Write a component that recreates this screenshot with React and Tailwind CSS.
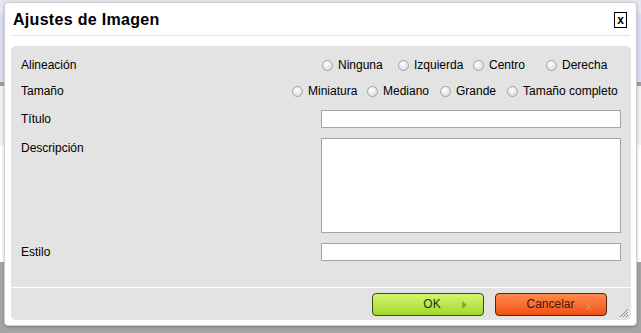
import React from "react";

const Radio = ({ label, className = "" }) => (
  <label className={`flex items-center ${className}`}>
    <span className="h-[11px] w-[11px] shrink-0 rounded-full border border-[#a3a3a3] bg-[radial-gradient(circle_at_40%_35%,#ffffff_0%,#ececec_45%,#cfcfcf_100%)]" />
    <span className="ml-[5px] whitespace-nowrap">{label}</span>
  </label>
);

const Field = ({ className = "" }) => (
  <div className={`w-[300px] border border-[#a5a5a5] bg-white ${className}`} />
);

export default function App() {
  return (
    <div className="relative h-[333px] w-[641px] overflow-hidden bg-[#a6a6a6] font-['Liberation_Sans',Arial,sans-serif] text-[12px] text-black">
      {/* page behind the dialog */}
      <div className="flex h-full flex-col">
        <div className="h-[14px] bg-[#e6e6f2]" />
        <div className="h-[68px] bg-[#d8dcf4]" />
        <div className="h-[4px] bg-[#9c9c9c]" />
        <div className="h-[59px] bg-[#f1f1f1]" />
        <div className="h-[117px] bg-white" />
        <div className="flex-1 bg-[#a4a4a4]" />
      </div>

      {/* dialog */}
      <div className="absolute left-[4px] top-[2px] flex h-[324px] w-[633px] flex-col rounded-[4px] border border-[#cfcfcf] bg-white shadow-[0_1px_3px_rgba(0,0,0,0.25)]">
        <div className="mx-[6px] flex h-[33px] shrink-0 items-center justify-between border-b border-[#e2e2e2] pl-[2px]">
          <h1 className="mt-[1px] text-[16px] font-bold tracking-[0.3px] text-black">
            Ajustes de Imagen
          </h1>
          <button className="mr-[3px] mt-[1px] flex h-[16px] w-[13px] items-center justify-center border border-black text-[12px] font-bold leading-none text-black">
            x
          </button>
        </div>

        <div className="relative ml-[6px] mr-[5px] mt-[10px] flex flex-col rounded-[5px] bg-[#e3e3e3]">
          <div className="flex flex-col px-[10px] pt-[10px]">
            <div className="flex h-[18px] items-center">
              <span className="w-[301px] shrink-0">Alineación</span>
              <Radio label="Ninguna" className="w-[76px]" />
              <Radio label="Izquierda" className="w-[75px]" />
              <Radio label="Centro" className="w-[73px]" />
              <Radio label="Derecha" />
            </div>
            <div className="mt-[8px] flex h-[18px] items-center">
              <span className="w-[271px] shrink-0">Tamaño</span>
              <Radio label="Miniatura" className="w-[75px]" />
              <Radio label="Mediano" className="w-[73px]" />
              <Radio label="Grande" className="w-[67px]" />
              <Radio label="Tamaño completo" />
            </div>
            <div className="mt-[10px] flex items-center">
              <span className="w-[300px] shrink-0">Título</span>
              <Field className="h-[18px]" />
            </div>
            <div className="mt-[10px] flex items-start">
              <span className="mt-[1px] w-[300px] shrink-0">Descripción</span>
              <Field className="h-[95px]" />
            </div>
            <div className="mt-[10px] flex items-center">
              <span className="w-[300px] shrink-0">Estilo</span>
              <Field className="h-[18px]" />
            </div>
          </div>

          <div className="mt-[26px] flex h-[33px] items-center justify-end gap-[11px] border-t border-white pr-[24px]">
            <button className="relative flex h-[23px] w-[112px] items-center justify-center rounded-[4px] border border-[#3d4a16] bg-gradient-to-b from-[#d2f56e] to-[#a2da24] text-[12px] text-[#26330a]">
              <span className="ml-[8px]">OK</span>
              <span className="absolute right-[16px] top-[7px] h-0 w-0 border-y-[4px] border-l-[5px] border-y-transparent border-l-[#8ea43a]" />
            </button>
            <button className="relative flex h-[23px] w-[112px] items-center justify-center rounded-[4px] border border-[#5a2208] bg-gradient-to-b from-[#ff8a4c] to-[#f0500f] text-[12px] text-[#4a1600]">
              <span className="-ml-[1px]">Cancelar</span>
              <span className="absolute right-[14px] top-[4px] text-[11px] text-[#e0906a]">x</span>
            </button>
          </div>

          <svg className="absolute bottom-[2px] right-[2px]" width="11" height="11" viewBox="0 0 11 11">
            <path d="M10 2 L2 10 M10 5 L5 10 M10 8 L8 10" stroke="#8a8a8a" strokeWidth="1" />
          </svg>
        </div>
      </div>
    </div>
  );
}
